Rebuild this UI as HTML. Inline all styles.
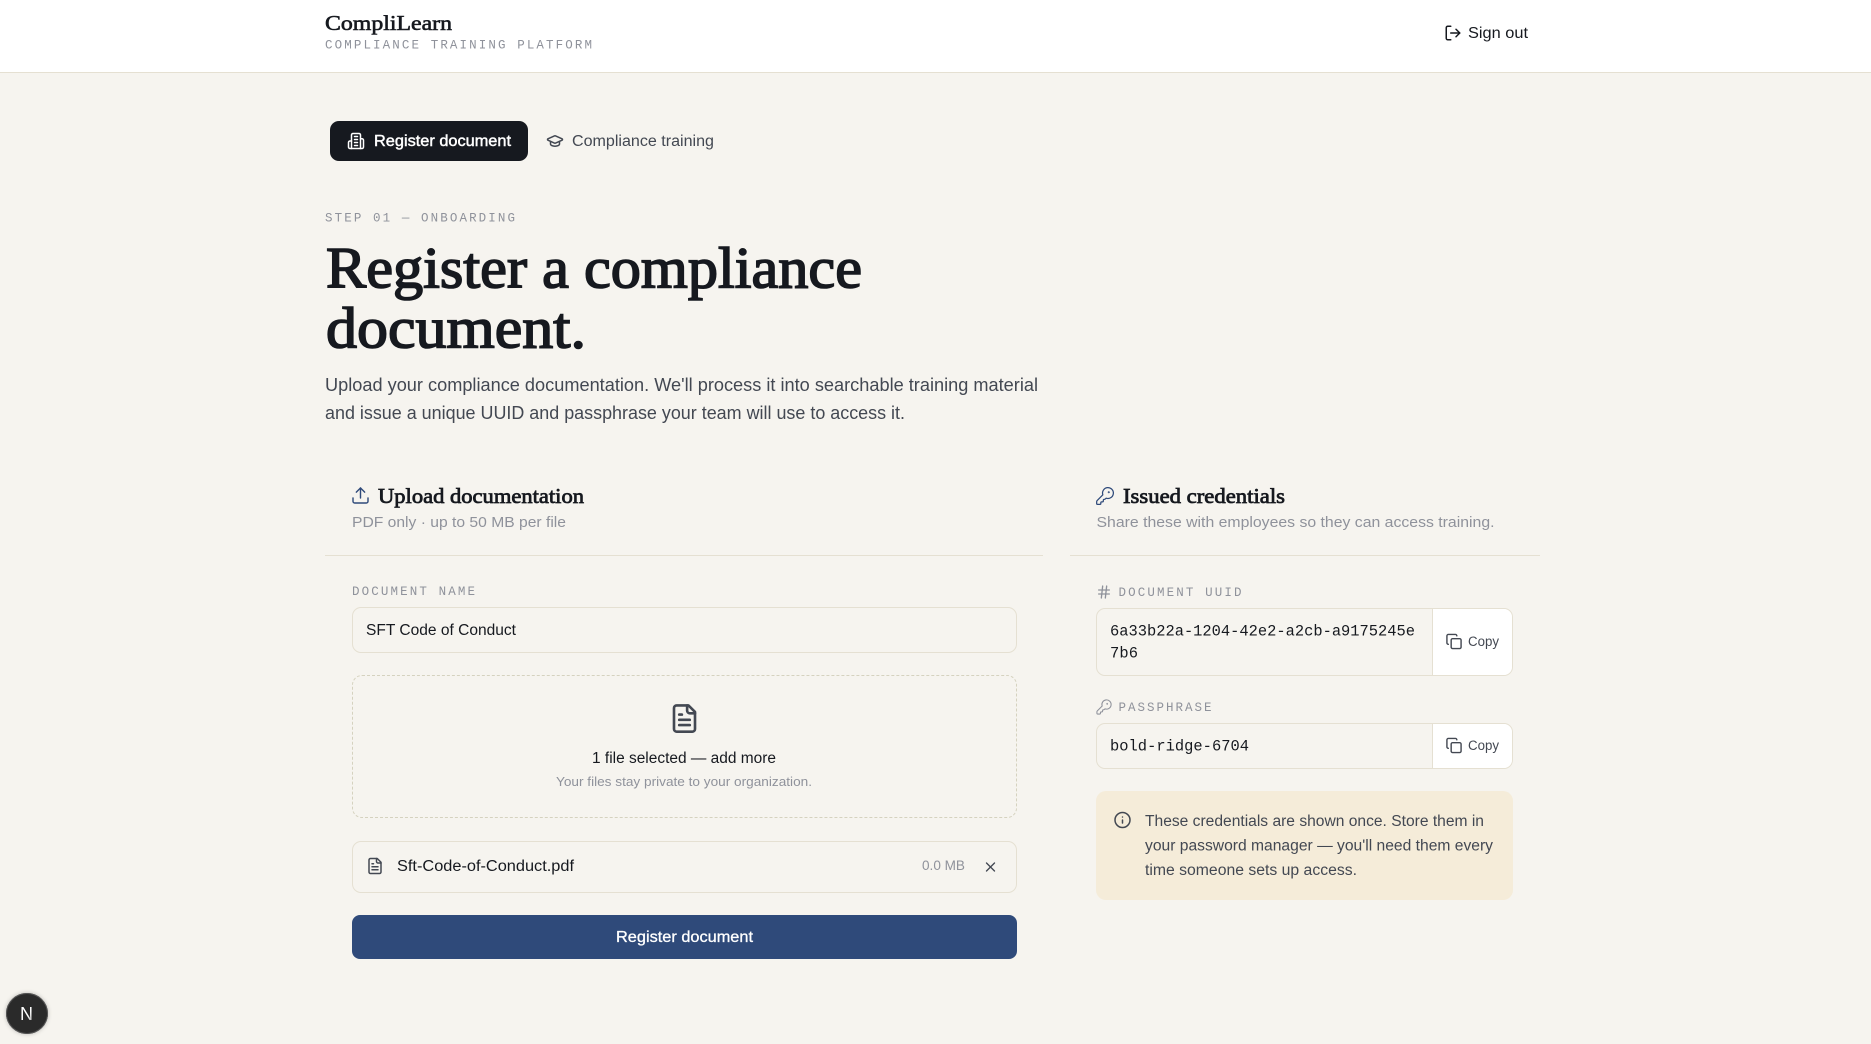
<!DOCTYPE html>
<html lang="en"><head><meta charset="utf-8"><title>CompliLearn</title>
<style>
html,body{margin:0;padding:0;width:1871px;height:1044px;overflow:hidden;background:#f6f4ef}
.b{position:absolute;box-sizing:border-box}
svg.o{position:absolute;left:0;top:0}
text{font-family:"Liberation Sans",sans-serif;font-size:15.5px;fill:#16191f;white-space:pre}
.s{font-family:"Liberation Serif",serif;font-weight:400;stroke:#16191f;stroke-width:.6px}
.m{font-family:"Liberation Mono",monospace}
.l{font-size:12.5px;fill:#8f929b}
.g{fill:#8f929b}
.d{fill:#434852}
.i{fill:none;stroke-width:2;stroke-linecap:round;stroke-linejoin:round}
</style></head><body>
<div class="b" style="left:0;top:0;width:1871px;height:73px;background:#fff;border-bottom:1px solid #e5e0d2"></div>
<div class="b" style="left:330px;top:121px;width:198px;height:40px;border-radius:9px;background:#16191f"></div>
<div class="b" style="left:325px;top:555px;width:718px;height:1px;background:#e5e0d2"></div>
<div class="b" style="left:1070px;top:555px;width:470px;height:1px;background:#e5e0d2"></div>
<div class="b" style="left:352px;top:607px;width:665px;height:46px;border:1px solid #e5e0d2;border-radius:9px"></div>
<div class="b" style="left:352px;top:675px;width:665px;height:143px;border:1px dashed #d5d2bf;border-radius:10px"></div>
<div class="b" style="left:352px;top:841px;width:665px;height:52px;border:1px solid #e5e0d2;border-radius:9px"></div>
<div class="b" style="left:352px;top:915px;width:665px;height:44px;border-radius:8px;background:#2f4a7a"></div>
<div class="b" style="left:1096px;top:608px;width:417px;height:68px;border:1px solid #e5e0d2;border-radius:9px;overflow:hidden"><div class="b" style="right:0;top:0;width:80px;height:66px;background:#fff;border-left:1px solid #e5e0d2"></div></div>
<div class="b" style="left:1096px;top:723px;width:417px;height:46px;border:1px solid #e5e0d2;border-radius:9px;overflow:hidden"><div class="b" style="right:0;top:0;width:80px;height:44px;background:#fff;border-left:1px solid #e5e0d2"></div></div>
<div class="b" style="left:1096px;top:791px;width:417px;height:109px;border-radius:10px;background:#f5ecd9"></div>
<div class="b" style="left:6px;top:993px;width:42px;height:41px;border-radius:50%;background:#2a2a2a;box-shadow:0 0 0 1px #555 inset,0 0 4px rgba(0,0,0,.25)"></div>

<svg class="o" width="1871" height="1044" viewBox="0 0 1871 1044" xmlns="http://www.w3.org/2000/svg">
<defs>
<linearGradient id="ng" x1="0" y1="0" x2="1" y2="1"><stop offset="0" stop-color="#fff"/><stop offset=".6" stop-color="#fff"/><stop offset="1" stop-color="#888"/></linearGradient>
<g id="key"><path d="M2.586 17.414A2 2 0 0 0 2 18.828V21a1 1 0 0 0 1 1h3a1 1 0 0 0 1-1v-1a1 1 0 0 1 1-1h1a1 1 0 0 0 1-1v-1a1 1 0 0 1 1-1h.172a2 2 0 0 0 1.414-.586l.814-.814a6.5 6.5 0 1 0-4-4z"/><circle cx="16.5" cy="7.5" r=".5"/></g>
<g id="file"><path d="M15 2H6a2 2 0 0 0-2 2v16a2 2 0 0 0 2 2h12a2 2 0 0 0 2-2V7Z"/><path d="M14 2v4a2 2 0 0 0 2 2h4"/><path d="M10 9H8"/><path d="M16 13H8"/><path d="M16 17H8"/></g>
<g id="copy"><rect x="8" y="8" width="14" height="14" rx="2"/><path d="M4 16c-1.1 0-2-.9-2-2V4c0-1.1.9-2 2-2h10c1.1 0 2 .9 2 2"/></g>
</defs>

<text class="s" x="325" y="30" style="font-size:21px" textLength="127" lengthAdjust="spacingAndGlyphs">CompliLearn</text>
<text class="m l" x="325" y="48.5" textLength="267" lengthAdjust="spacing">COMPLIANCE TRAINING PLATFORM</text>
<svg x="1444" y="24" width="18" height="18" viewBox="0 0 24 24" class="i" stroke="#16191f"><path d="M9 21H5a2 2 0 0 1-2-2V5a2 2 0 0 1 2-2h4"/><path d="M16 17l5-5-5-5"/><path d="M21 12H9"/></svg>
<text x="1468" y="38" textLength="60" lengthAdjust="spacingAndGlyphs">Sign out</text>

<svg x="347" y="132" width="18" height="18" viewBox="0 0 24 24" class="i" stroke="#fff"><path d="M6 22V4a2 2 0 0 1 2-2h8a2 2 0 0 1 2 2v18Z"/><path d="M6 12H4a2 2 0 0 0-2 2v6a2 2 0 0 0 2 2h2"/><path d="M18 9h2a2 2 0 0 1 2 2v9a2 2 0 0 1-2 2h-2"/><path d="M10 6h4M10 10h4M10 14h4M10 18h4"/></svg>
<text x="374" y="146" style="fill:#fff;stroke:#fff;stroke-width:.45" textLength="137" lengthAdjust="spacingAndGlyphs">Register document</text>
<svg x="546" y="132" width="18" height="18" viewBox="0 0 24 24" class="i" stroke="#434852"><path d="M21.42 10.922a1 1 0 0 0-.019-1.838L12.83 5.18a2 2 0 0 0-1.66 0L2.6 9.08a1 1 0 0 0 0 1.832l8.57 3.908a2 2 0 0 0 1.66 0z"/><path d="M6 12.5V16a6 3 0 0 0 12 0v-3.5"/></svg>
<text class="d" x="572" y="146" textLength="142" lengthAdjust="spacingAndGlyphs">Compliance training</text>

<text class="m l" x="325" y="221.5" textLength="190" lengthAdjust="spacing">STEP 01 — ONBOARDING</text>
<text class="s" x="326" y="287.5" style="font-size:58px;stroke-width:1.6px" textLength="536" lengthAdjust="spacingAndGlyphs">Register a compliance</text>
<text class="s" x="326" y="347.5" style="font-size:58px;stroke-width:1.6px" textLength="260" lengthAdjust="spacingAndGlyphs">document.</text>
<text class="d" x="325" y="391" style="font-size:18.5px" textLength="713" lengthAdjust="spacingAndGlyphs">Upload your compliance documentation. We'll process it into searchable training material</text>
<text class="d" x="325" y="419" style="font-size:18.5px" textLength="580" lengthAdjust="spacingAndGlyphs">and issue a unique UUID and passphrase your team will use to access it.</text>

<svg x="350.5" y="485.5" width="20" height="20" viewBox="0 0 24 24" class="i" stroke="#2f4a7a" style="stroke-width:1.7"><path d="M21 15v4a2 2 0 0 1-2 2H5a2 2 0 0 1-2-2v-4"/><path d="M17 8l-5-5-5 5"/><path d="M12 3v12"/></svg>
<text class="s" x="378" y="503" style="font-size:21px;stroke-width:.75px" textLength="206" lengthAdjust="spacingAndGlyphs">Upload documentation</text>
<text class="g" x="352" y="527" style="font-size:15px" textLength="214" lengthAdjust="spacingAndGlyphs">PDF only · up to 50 MB per file</text>
<text class="m l" x="352" y="595" textLength="123" lengthAdjust="spacing">DOCUMENT NAME</text>
<text x="366" y="635" textLength="150" lengthAdjust="spacingAndGlyphs">SFT Code of Conduct</text>

<svg x="668.75" y="702.75" width="31.5" height="31.5" viewBox="0 0 24 24" class="i" stroke="#434852"><use href="#file"/></svg>
<text x="592" y="763" textLength="184" lengthAdjust="spacingAndGlyphs">1 file selected — add more</text>
<text class="g" x="556" y="786" style="font-size:13px" textLength="256" lengthAdjust="spacingAndGlyphs">Your files stay private to your organization.</text>

<svg x="366" y="857" width="18" height="18" viewBox="0 0 24 24" class="i" stroke="#434852"><use href="#file"/></svg>
<text x="397" y="871" textLength="177" lengthAdjust="spacingAndGlyphs">Sft-Code-of-Conduct.pdf</text>
<text class="g" x="922" y="870" style="font-size:13.5px" textLength="43" lengthAdjust="spacingAndGlyphs">0.0 MB</text>
<svg x="982.5" y="859" width="16" height="16" viewBox="0 0 24 24" class="i" stroke="#434852"><path d="M18 6 6 18"/><path d="m6 6 12 12"/></svg>
<text x="616" y="942" style="fill:#fff;stroke:#fff;stroke-width:.3" textLength="137" lengthAdjust="spacingAndGlyphs">Register document</text>

<svg x="1095" y="486" width="20" height="20" viewBox="0 0 24 24" class="i" stroke="#2f4a7a" style="stroke-width:1.5"><use href="#key"/></svg>
<text class="s" x="1123" y="503" style="font-size:21px;stroke-width:.75px" textLength="162" lengthAdjust="spacingAndGlyphs">Issued credentials</text>
<text class="g" x="1096.5" y="527" style="font-size:15px" textLength="398" lengthAdjust="spacingAndGlyphs">Share these with employees so they can access training.</text>

<svg x="1096" y="584" width="16" height="16" viewBox="0 0 24 24" class="i" stroke="#8f929b"><path d="M4 9h16M4 15h16M10 3 8 21M16 3l-2 18"/></svg>
<text class="m l" x="1118.5" y="596" textLength="123" lengthAdjust="spacing">DOCUMENT UUID</text>
<text class="m" x="1110" y="635.5" style="font-size:15.4px" textLength="305" lengthAdjust="spacing">6a33b22a-1204-42e2-a2cb-a9175245e</text>
<text class="m" x="1110" y="657.5" style="font-size:15.4px" textLength="28" lengthAdjust="spacing">7b6</text>
<svg x="1445.5" y="633" width="17" height="17" viewBox="0 0 24 24" class="i" stroke="#434852"><use href="#copy"/></svg>
<text class="d" x="1468" y="646" style="font-size:13.5px" textLength="31" lengthAdjust="spacingAndGlyphs">Copy</text>

<svg x="1095.5" y="698.5" width="17" height="17" viewBox="0 0 24 24" class="i" stroke="#8f929b" style="stroke-width:1.5"><use href="#key"/></svg>
<text class="m l" x="1118.5" y="711" textLength="93" lengthAdjust="spacing">PASSPHRASE</text>
<text class="m" x="1110" y="750.5" style="font-size:15.4px" textLength="139" lengthAdjust="spacing">bold-ridge-6704</text>
<svg x="1445.5" y="737" width="17" height="17" viewBox="0 0 24 24" class="i" stroke="#434852"><use href="#copy"/></svg>
<text class="d" x="1468" y="750" style="font-size:13.5px" textLength="31" lengthAdjust="spacingAndGlyphs">Copy</text>

<svg x="1113.5" y="811" width="18" height="18" viewBox="0 0 24 24" class="i" stroke="#434852"><circle cx="12" cy="12" r="10"/><path d="M12 16v-4"/><path d="M12 8h.01"/></svg>
<text class="d" x="1145" y="826" textLength="339" lengthAdjust="spacingAndGlyphs">These credentials are shown once. Store them in</text>
<text class="d" x="1145" y="850.5" textLength="348" lengthAdjust="spacingAndGlyphs">your password manager — you'll need them every</text>
<text class="d" x="1145" y="875" textLength="212" lengthAdjust="spacingAndGlyphs">time someone sets up access.</text>

<text x="20" y="1020" style="fill:url(#ng);font-size:18px" textLength="13" lengthAdjust="spacingAndGlyphs">N</text>
</svg>
</body></html>
